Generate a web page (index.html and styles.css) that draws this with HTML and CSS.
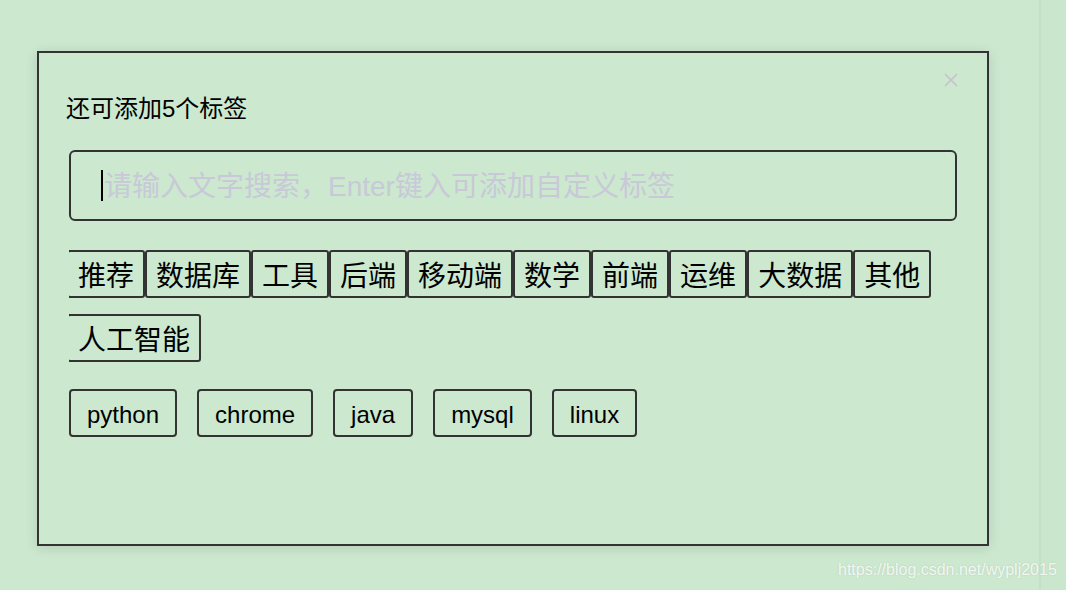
FILE: index.html
```html
<!DOCTYPE html>
<html lang="zh-CN">
<head>
    <meta charset="UTF-8">
    <meta name="viewport" content="width=device-width, initial-scale=1.0">
    <title>添加标签</title>
    <link rel="stylesheet" href="styles.css">
</head>
<body>
    <div class="page">
        <div class="main">
            <div class="dialog">
                <svg class="close" width="14" height="14" viewBox="0 0 14 14">
                    <path d="M1 1L13 13M13 1L1 13" stroke="#c4c4ce" stroke-width="1.7" fill="none"/>
                </svg>

                <div class="title">还可添加5个标签</div>

                <div class="search">
                    <span class="caret"></span>
                    <span class="placeholder">请输入文字搜索，Enter键入可添加自定义标签</span>
                </div>

                <div class="cats">
                    <div class="cats-inner">
                        <span class="cat">推荐</span>
                        <span class="cat">数据库</span>
                        <span class="cat">工具</span>
                        <span class="cat">后端</span>
                        <span class="cat">移动端</span>
                        <span class="cat">数学</span>
                        <span class="cat">前端</span>
                        <span class="cat">运维</span>
                        <span class="cat">大数据</span>
                        <span class="cat">其他</span>
                        <span class="cat">人工智能</span>
                    </div>
                </div>

                <div class="tags">
                    <span class="tag">python</span>
                    <span class="tag">chrome</span>
                    <span class="tag">java</span>
                    <span class="tag">mysql</span>
                    <span class="tag">linux</span>
                </div>
            </div>
        </div>
        <div class="edge"></div>
    </div>

    <div class="watermark">https://blog.csdn.net/wyplj2015</div>
</body>
</html>
```

FILE: styles.css
```css
*{
    box-sizing: border-box;
    padding: 0;
    margin: 0;
}

body{
    background-color: #cce8cf;
    font-family: "Liberation Sans", "Noto Sans CJK SC", sans-serif;
    color: #000;
}

.page{
    display: flex;
    height: 590px;
    overflow: hidden;
}
.main{
    flex: 1;
}
.edge{
    width: 27px;
    background-color: #cae6cd;
    border-left: 2px solid #c5e0c8;
}

.dialog{
    position: relative;
    width: 952px;
    height: 495px;
    margin: 51px 0 0 37px;
    border: 2px solid #333;
    padding: 0 30px;
    box-shadow: 0 2px 12px rgba(0, 0, 0, 0.12);
}

.close{
    position: absolute;
    top: 20px;
    right: 29px;
}

.title{
    font-size: 24px;
    line-height: 32px;
    margin: 40px 0 0 -3px;
}

.search{
    display: flex;
    align-items: center;
    height: 71px;
    margin-top: 25px;
    border: 2px solid #333;
    border-radius: 6px;
    padding-left: 30px;
    font-size: 28px;
}
.caret{
    width: 2px;
    height: 31px;
    background-color: #000;
    margin-right: 1px;
}
.placeholder{
    color: #c8c8d8;
    margin-bottom: 4px;
}

.cats{
    overflow: hidden;
    margin-top: 29px;
}
.cats-inner{
    display: flex;
    flex-wrap: wrap;
    row-gap: 16px;
    margin-left: -2px;
}
.cat{
    font-size: 28px;
    line-height: 38px;
    padding: 6px 9px 0;
    border: 2px solid #333;
    border-radius: 3px;
}

.tags{
    display: flex;
    gap: 20px;
    margin-top: 27px;
}
.tag{
    font-size: 24px;
    line-height: 40px;
    padding: 4px 16px 0;
    border: 2px solid #333;
    border-radius: 4px;
}

.watermark{
    position: absolute;
    left: 838px;
    top: 561px;
    font-size: 16px;
    color: rgba(255, 255, 255, 0.8);
    text-shadow: 0 0 2px rgba(0, 0, 0, 0.12);
}
```
